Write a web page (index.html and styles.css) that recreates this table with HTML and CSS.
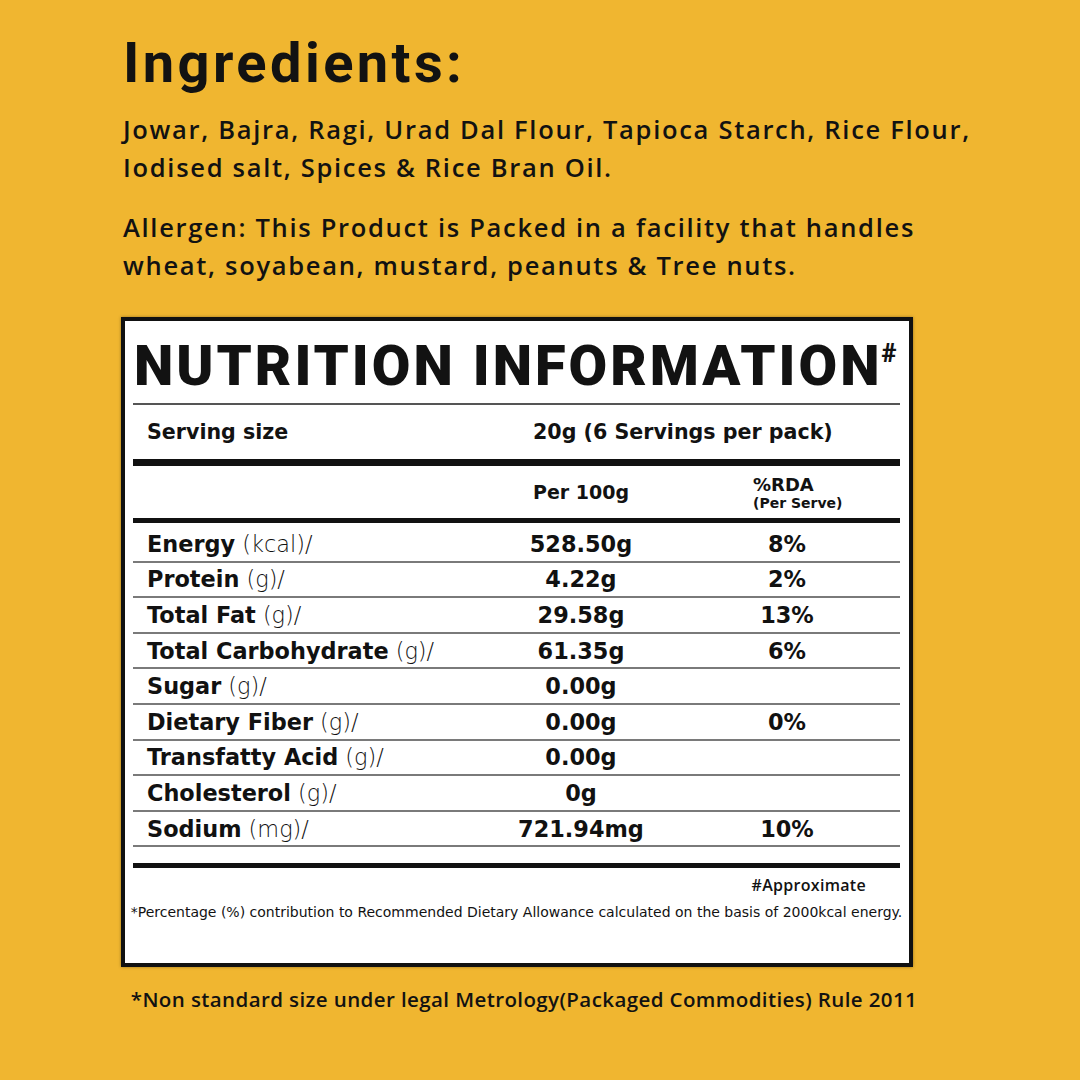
FILE: index.html
```html
<!DOCTYPE html>
<html lang="en">
<head>
<meta charset="utf-8">
<title>Ingredients &amp; Nutrition Information</title>
<link rel="stylesheet" href="styles.css">
</head>
<body>
<div class="page">
  <h1 class="title">Ingredients:</h1>
  <p class="text">Jowar, Bajra, Ragi, Urad Dal Flour, Tapioca Starch, Rice Flour,<br>Iodised salt, Spices &amp; Rice Bran Oil.</p>
  <p class="text">Allergen: This Product is Packed in a facility that handles<br>wheat, soyabean, mustard, peanuts &amp; Tree nuts.</p>

  <div class="panel">
    <div class="panel-title">NUTRITION INFORMATION<sup class="hash">#</sup></div>
    <div class="rule-thin"></div>
    <div class="serving">
      <span class="serving-label">Serving size</span>
      <span class="serving-value">20g (6 Servings per pack)</span>
    </div>
    <div class="rule-thick"></div>
    <div class="head">
      <span></span>
      <span class="head-per">Per 100g</span>
      <span class="head-rda">%RDA<small>(Per Serve)</small></span>
    </div>
    <div class="rule-mid"></div>
    <div class="rows">
      <div class="row"><span class="label"><b>Energy</b> (kcal)/</span><span class="val">528.50g</span><span class="rda">8%</span></div>
      <div class="row"><span class="label"><b>Protein</b> (g)/</span><span class="val">4.22g</span><span class="rda">2%</span></div>
      <div class="row"><span class="label"><b>Total Fat</b> (g)/</span><span class="val">29.58g</span><span class="rda">13%</span></div>
      <div class="row"><span class="label"><b>Total Carbohydrate</b> (g)/</span><span class="val">61.35g</span><span class="rda">6%</span></div>
      <div class="row"><span class="label"><b>Sugar</b> (g)/</span><span class="val">0.00g</span><span class="rda"></span></div>
      <div class="row"><span class="label"><b>Dietary Fiber</b> (g)/</span><span class="val">0.00g</span><span class="rda">0%</span></div>
      <div class="row"><span class="label"><b>Transfatty Acid</b> (g)/</span><span class="val">0.00g</span><span class="rda"></span></div>
      <div class="row"><span class="label"><b>Cholesterol</b> (g)/</span><span class="val">0g</span><span class="rda"></span></div>
      <div class="row"><span class="label"><b>Sodium</b> (mg)/</span><span class="val">721.94mg</span><span class="rda">10%</span></div>
    </div>
    <div class="rule-end"></div>
    <div class="approx">#Approximate</div>
    <div class="footnote">*Percentage (%) contribution to Recommended Dietary Allowance calculated on the basis of 2000kcal energy.</div>
  </div>

  <p class="note">*Non standard size under legal Metrology(Packaged Commodities) Rule 2011</p>
</div>
</body>
</html>
```
FILE: styles.css
```css
html, body {
  margin: 0;
  padding: 0;
}
body {
  background: #F0B630;
  color: #121212;
  font-family: "DejaVu Sans", "Noto Sans", sans-serif;
}
.page {
  width: 1080px;
  height: 1080px;
  box-sizing: border-box;
  padding: 33px 0 0 123px;
  overflow: hidden;
}
.title {
  margin: 0;
  font-family: Roboto, "Noto Sans", sans-serif;
  font-size: 56px;
  line-height: 60px;
  font-weight: 700;
  letter-spacing: 3.4px;
}
.text {
  margin: 17px 0 0;
  font-family: "Open Sans", "DejaVu Sans", sans-serif;
  font-size: 25.5px;
  line-height: 38px;
  font-weight: 600;
  letter-spacing: 1.7px;
  white-space: nowrap;
}
.text + .text {
  margin-top: 22px;
}
.panel {
  margin: 33px 0 0 -2px;
  width: 792px;
  height: 650px;
  box-sizing: border-box;
  border: 4px solid #111;
  background: #fff;
  padding: 15px 9px 0 8px;
  box-shadow: 0 0 3px rgba(0,0,0,0.35);
}
.panel-title {
  font-family: Roboto, "Noto Sans", sans-serif;
  font-size: 56px;
  line-height: 60px;
  font-weight: 900;
  letter-spacing: 3px;
  white-space: nowrap;
  padding-left: 1px;
}
.hash {
  font-size: 26px;
  vertical-align: top;
  line-height: 26px;
  letter-spacing: 0;
  position: relative;
  top: 4px;
  margin-left: -1px;
}
.rule-thin {
  margin-top: 7px;
  height: 2px;
  background: #555;
}
.serving {
  height: 54px;
  display: grid;
  grid-template-columns: 400px 1fr;
  align-items: center;
  font-size: 20.6px;
  font-weight: 700;
  white-space: nowrap;
}
.serving-label {
  padding-left: 14px;
}
.rule-thick {
  height: 7px;
  background: #111;
}
.head {
  height: 52px;
  display: grid;
  grid-template-columns: 347px 202px 218px;
  align-items: center;
  font-weight: 700;
}
.head-per {
  text-align: center;
  font-size: 19px;
}
.head-rda {
  padding-left: 71px;
  font-size: 18px;
  line-height: 19px;
  padding-top: 2px;
  white-space: nowrap;
}
.head-rda small {
  display: block;
  font-size: 14px;
  line-height: 18px;
}
.rule-mid {
  height: 5px;
  background: #111;
}
.rows {
  padding-top: 4px;
}
.row {
  height: 33.6px;
  border-bottom: 2px solid #7a7a7a;
  display: grid;
  grid-template-columns: 347px 202px 218px;
  align-items: center;
  font-size: 22.4px;
  font-weight: 200;
  color: #111;
}
.label {
  padding-left: 14px;
  white-space: nowrap;
}
.label b {
  font-weight: 700;
}
.val, .rda {
  text-align: center;
  font-weight: 700;
  white-space: nowrap;
}
.rda {
  padding-right: 8px;
}
.rule-end {
  margin-top: 16px;
  height: 5px;
  background: #111;
}
.approx {
  margin-top: 7px;
  text-align: right;
  padding-right: 34px;
  font-family: "Open Sans", "DejaVu Sans", sans-serif;
  font-size: 16px;
  line-height: 20px;
  font-weight: 600;
  letter-spacing: 0.3px;
}
.footnote {
  margin: 8px -8px 0 -8px;
  text-align: center;
  font-size: 14px;
  line-height: 18px;
  font-weight: 400;
  white-space: nowrap;
}
.note {
  margin: 18px 0 0 5px;
  width: 792px;
  text-align: center;
  font-family: "Open Sans", "DejaVu Sans", sans-serif;
  font-size: 20.5px;
  line-height: 28px;
  font-weight: 600;
  letter-spacing: 0.4px;
  white-space: nowrap;
}
```
